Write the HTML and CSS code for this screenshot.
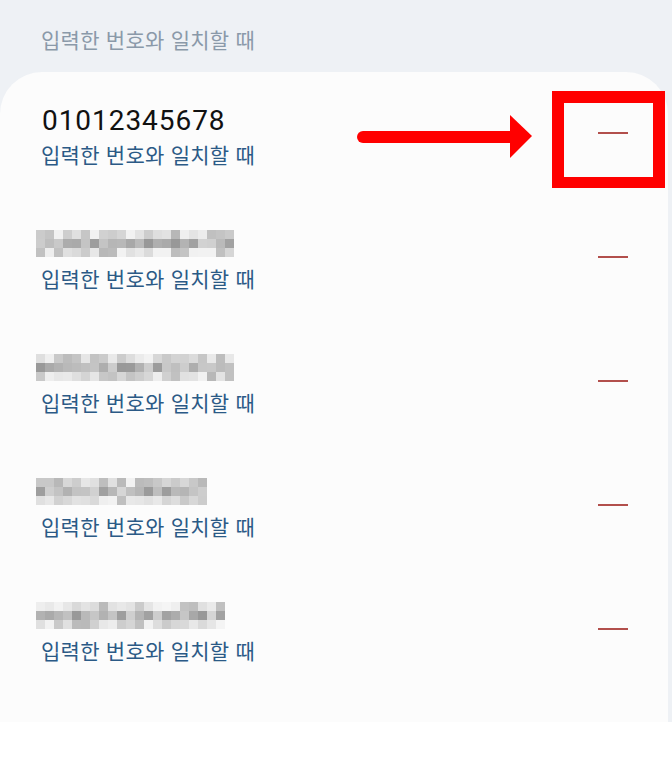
FILE: index.html
```html
<!DOCTYPE html>
<html lang="ko">
<head>
  <meta charset="UTF-8">
  <meta name="viewport" content="width=device-width, initial-scale=1.0">
  <title>차단 번호</title>
  <link rel="stylesheet" href="styles.css">
</head>
<body>
  <div class="screen">
    <div class="section-title">입력한 번호와 일치할 때</div>
    <div class="card">
      <div class="row">
        <div class="info">
          <div class="number">01012345678</div>
          <div class="rule">입력한 번호와 일치할 때</div>
        </div>
        <button class="remove" aria-label="삭제"></button>
      </div>
      <div class="row">
        <div class="info">
          <div class="number"><span class="mosaic" data-cols="22" data-seed="3"></span></div>
          <div class="rule">입력한 번호와 일치할 때</div>
        </div>
        <button class="remove" aria-label="삭제"></button>
      </div>
      <div class="row">
        <div class="info">
          <div class="number"><span class="mosaic" data-cols="22" data-seed="11"></span></div>
          <div class="rule">입력한 번호와 일치할 때</div>
        </div>
        <button class="remove" aria-label="삭제"></button>
      </div>
      <div class="row">
        <div class="info">
          <div class="number"><span class="mosaic" data-cols="19" data-seed="27"></span></div>
          <div class="rule">입력한 번호와 일치할 때</div>
        </div>
        <button class="remove" aria-label="삭제"></button>
      </div>
      <div class="row">
        <div class="info">
          <div class="number"><span class="mosaic" data-cols="21" data-seed="42"></span></div>
          <div class="rule">입력한 번호와 일치할 때</div>
        </div>
        <button class="remove" aria-label="삭제"></button>
      </div>
    </div>

    <!-- annotation -->
    <svg class="arrow" width="180" height="48" viewBox="0 0 180 48">
      <line x1="8" y1="25" x2="160" y2="25" stroke="#ff0000" stroke-width="12" stroke-linecap="round"/>
      <polygon points="155,3 177,24 155,46" fill="#ff0000"/>
    </svg>
    <div class="highlight"></div>
  </div>

  <script>
    document.querySelectorAll('.mosaic').forEach(el => {
      const cols = Number(el.dataset.cols);
      let seed = Number(el.dataset.seed);
      function rand() {
        seed = (seed * 9301 + 49297) % 233280;
        return seed / 233280;
      }
      for (let r = 0; r < 3; r++) {
        for (let c = 0; c < cols; c++) {
          const cell = document.createElement('span');
          const base = r === 1 ? 140 : 175;
          const shade = Math.round(base + rand() * 70);
          cell.style.background = `rgb(${shade},${shade},${shade})`;
          el.appendChild(cell);
        }
      }
      el.style.gridTemplateColumns = `repeat(${cols}, 9px)`;
    });
  </script>
</body>
</html>
```

FILE: styles.css
```css
body {
  margin: 0;
  background-color: #ffffff;
  font-family: "Noto Sans CJK KR", "Noto Sans", sans-serif;
}
.screen {
  position: relative;
  background-color: #eef1f5;
  width: 672px;
}
.section-title {
  height: 72px;
  box-sizing: border-box;
  padding: 25px 0 0 41px;
  font-size: 21px;
  line-height: 28px;
  letter-spacing: 0.25px;
  color: #8a99a9;
}
.card {
  background-color: #fcfcfc;
  width: 668px;
  border-radius: 42px 42px 0 0;
  padding-bottom: 30px;
}
.row {
  height: 124px;
  box-sizing: border-box;
  display: flex;
  align-items: center;
  justify-content: space-between;
  padding: 4px 40px 0 41px;
}
.info {
  display: flex;
  flex-direction: column;
}
.number {
  font-family: Roboto, "Noto Sans", sans-serif;
  font-size: 28px;
  line-height: 32px;
  color: #111111;
  margin-left: 1px;
  letter-spacing: 0.95px;
  height: 32px;
}
.rule {
  margin-top: 3px;
  font-size: 21px;
  line-height: 28px;
  letter-spacing: 0.25px;
  color: #2b5a86;
}
.mosaic {
  display: grid;
  grid-auto-rows: 9px;
  margin: 0 0 0 -6px;
  padding-top: 1px;
  opacity: 0.9;
}
.remove {
  width: 30px;
  height: 2px;
  margin-top: -6px;
  padding: 0;
  border: none;
  background-color: #b24f4c;
}
.arrow {
  position: absolute;
  left: 355px;
  top: 112px;
}
.highlight {
  position: absolute;
  left: 552px;
  top: 91px;
  width: 89px;
  height: 74px;
  border: 12px solid #ff0000;
  border-bottom-width: 11px;
}
```
